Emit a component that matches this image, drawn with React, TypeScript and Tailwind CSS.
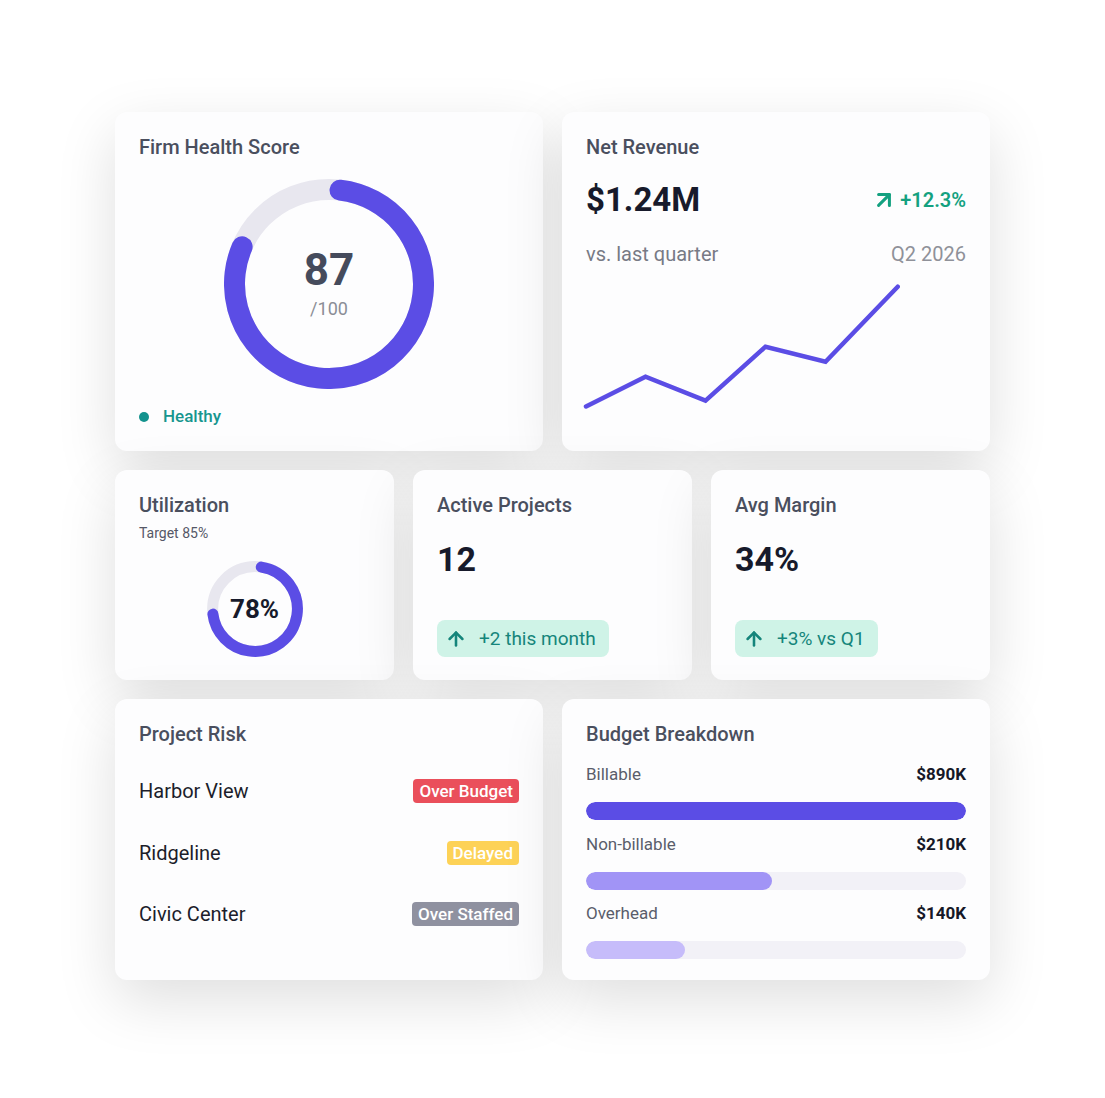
import { ArrowUp, ArrowUpRight } from 'lucide-react';

function Ring({
  size,
  r,
  stroke,
  start,
  end,
}: {
  size: number;
  r: number;
  stroke: number;
  start: number;
  end: number;
}) {
  const c = 2 * Math.PI * r;
  const dash = ((end - start) / 360) * c;
  const mid = size / 2;
  return (
    <svg width={size} height={size} viewBox={`0 0 ${size} ${size}`}>
      <circle cx={mid} cy={mid} r={r} fill="none" stroke="#e8e7ef" strokeWidth={stroke} />
      <circle
        cx={mid}
        cy={mid}
        r={r}
        fill="none"
        stroke="#5b4de5"
        strokeWidth={stroke}
        strokeLinecap="round"
        strokeDasharray={`${dash} ${c}`}
        transform={`rotate(${start - 90} ${mid} ${mid})`}
      />
    </svg>
  );
}

function Card({ className = '', children }: { className?: string; children: React.ReactNode }) {
  return (
    <div
      className={`min-h-0 overflow-hidden rounded-xl bg-[#fdfdfe] shadow-[0_20px_60px_rgba(0,0,0,0.13)] p-6 flex flex-col ${className}`}
    >
      {children}
    </div>
  );
}

function Title({ children }: { children: React.ReactNode }) {
  return <h3 className="text-[20px] leading-[22px] font-medium text-[#4a4f5e]">{children}</h3>;
}

function Trend({ label }: { label: string }) {
  return (
    <div className="mt-[41px] inline-flex w-fit h-[37px] shrink-0 items-center gap-3 rounded-lg bg-[#cff3e7] pl-2 pr-[13px] text-[#15857b]">
      <ArrowUp size={22} strokeWidth={2.8} />
      <span className="text-[19px] leading-none">{label}</span>
    </div>
  );
}

const risks = [
  { name: 'Harbor View', tag: 'Over Budget', color: 'bg-[#ea4f5b]' },
  { name: 'Ridgeline', tag: 'Delayed', color: 'bg-[#fdd257]' },
  { name: 'Civic Center', tag: 'Over Staffed', color: 'bg-[#8f91a0]' },
];

const budget = [
  { label: 'Billable', value: '$890K', fill: 'w-full bg-[#5b4de5]' },
  { label: 'Non-billable', value: '$210K', fill: 'w-[49%] bg-[#a194f6]' },
  { label: 'Overhead', value: '$140K', fill: 'w-[26%] bg-[#c6bcfa]' },
];

export default function App() {
  return (
    <div className="min-h-[1098px] w-full bg-white flex justify-center pt-[112px] font-['Roboto',sans-serif]">
      <div className="w-[875px] flex flex-col gap-[19px]">
        <div className="grid grid-cols-2 grid-rows-[339px] gap-[19px]">
          <Card>
            <Title>Firm Health Score</Title>
            <div className="relative mt-[21px] self-center w-[210px] h-[210px] shrink-0">
              <Ring size={210} r={94.5} stroke={21} start={6.7} end={292.8} />
              <div className="absolute inset-0 flex flex-col items-center justify-center">
                <span className="text-[44px] leading-[40px] font-bold text-[#454b5c]">87</span>
                <span className="mt-[9px] text-[18px] leading-5 text-[#8b8d96]">/100</span>
              </div>
            </div>
            <div className="mt-[17px] flex items-center gap-3.5 h-[22px]">
              <span className="w-2.5 h-2.5 rounded-full bg-[#12928d]" />
              <span className="text-[17px] font-medium text-[#17968f]">Healthy</span>
            </div>
          </Card>

          <Card>
            <Title>Net Revenue</Title>
            <div className="mt-[22px] h-10 flex items-center justify-between">
              <span className="text-[33px] leading-10 font-bold text-[#171a2b]">$1.24M</span>
              <span className="flex items-center gap-[3px] text-[20px] font-semibold text-[#14a180]">
                <ArrowUpRight size={26} strokeWidth={2.8} />
                +12.3%
              </span>
            </div>
            <div className="mt-[22px] h-6 flex items-center justify-between text-[20px]">
              <span className="text-[#777a85]">vs. last quarter</span>
              <span className="text-[#8f9199]">Q2 2026</span>
            </div>
            <svg width="380" height="130" viewBox="0 0 380 130" className="mt-[14px] shrink-0 overflow-visible">
              <polyline
                points="0,126.5 59.5,96.7 119.5,120.7 179.5,66.7 239.5,81.7 311.7,6.7"
                fill="none"
                stroke="#5b4de5"
                strokeWidth={4.5}
                strokeLinecap="round"
              />
            </svg>
          </Card>
        </div>

        <div className="grid grid-cols-3 grid-rows-[210px] gap-[19px]">
          <Card>
            <Title>Utilization</Title>
            <p className="mt-2 text-[14px] leading-[18px] text-[#555867]">Target 85%</p>
            <div className="relative mt-[19px] self-center w-24 h-24 shrink-0">
              <Ring size={96} r={42.4} stroke={11} start={8.5} end={262.6} />
              <div className="absolute inset-0 flex items-center justify-center">
                <span className="text-[26px] font-bold text-[#171a2b]">78%</span>
              </div>
            </div>
          </Card>

          <Card>
            <Title>Active Projects</Title>
            <span className="mt-[23px] h-10 shrink-0 text-[34px] leading-10 font-bold text-[#171a2b]">12</span>
            <Trend label="+2 this month" />
          </Card>

          <Card>
            <Title>Avg Margin</Title>
            <span className="mt-[23px] h-10 shrink-0 text-[34px] leading-10 font-bold text-[#171a2b]">34%</span>
            <Trend label="+3% vs Q1" />
          </Card>
        </div>

        <div className="grid grid-cols-2 grid-rows-[281px] gap-[19px]">
          <Card>
            <Title>Project Risk</Title>
            <div className="mt-[34px] flex flex-col gap-[37.5px]">
              {risks.map((r) => (
                <div key={r.name} className="h-6 flex items-center justify-between">
                  <span className="text-[20px] text-[#1c1e2b]">{r.name}</span>
                  <span
                    className={`${r.color} h-6 px-1.5 rounded text-[17px] leading-6 font-medium text-white`}
                  >
                    {r.tag}
                  </span>
                </div>
              ))}
            </div>
          </Card>

          <Card>
            <Title>Budget Breakdown</Title>
            <div className="mt-5 flex flex-col shrink-0">
              {budget.map((b, i) => (
                <div key={b.label} className={i === 1 ? 'mt-[15px]' : i === 2 ? 'mt-[14px]' : ''}>
                  <div className="h-5 flex items-center justify-between text-[17px]">
                    <span className="text-[#5a5d6b]">{b.label}</span>
                    <span className="font-bold text-[#161827]">{b.value}</span>
                  </div>
                  <div className="mt-[17px] h-[18px] rounded-full bg-[#f2f1f7] overflow-hidden">
                    <div className={`h-full rounded-full ${b.fill}`} />
                  </div>
                </div>
              ))}
            </div>
          </Card>
        </div>
      </div>
    </div>
  );
}
